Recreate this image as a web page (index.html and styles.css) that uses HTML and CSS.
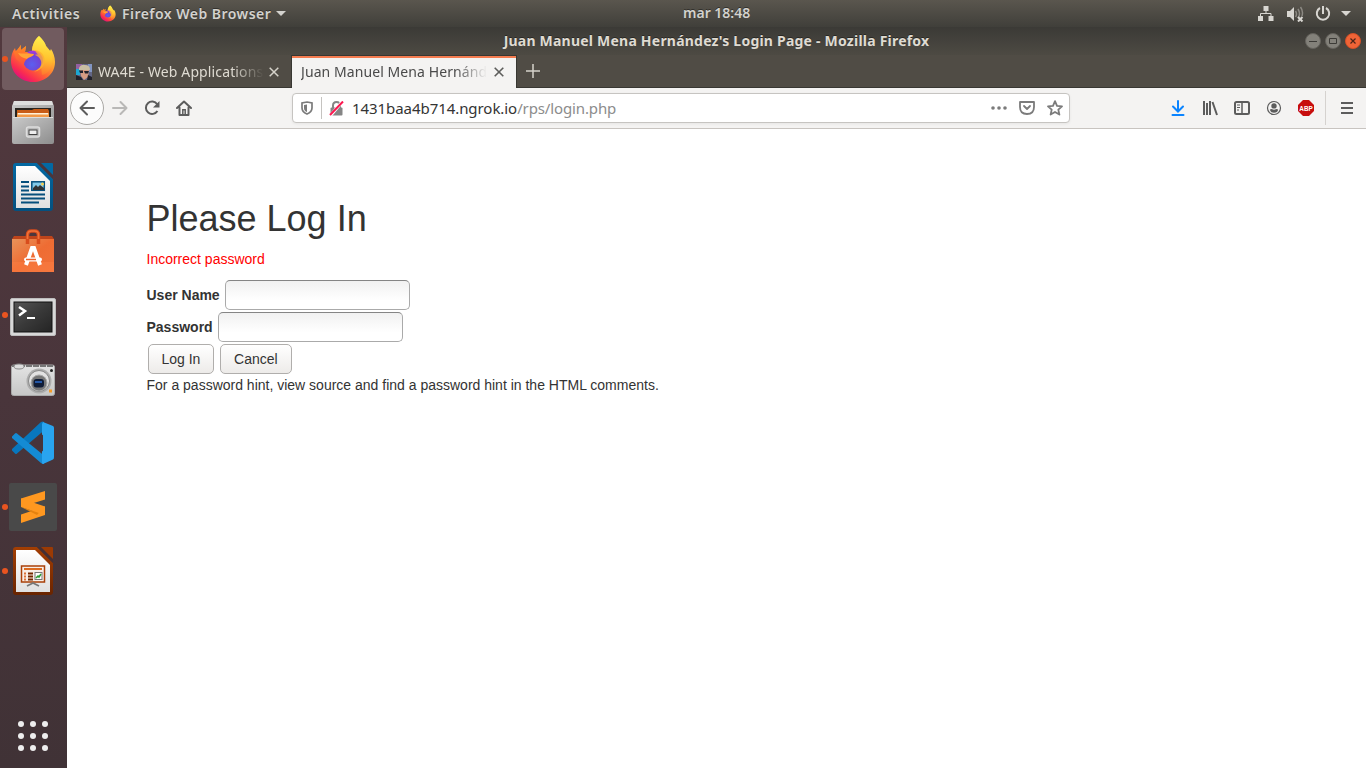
FILE: index.html
```
<!DOCTYPE html>
<html lang="en">
<head>
<meta charset="utf-8">
<title>Juan Manuel Mena Hernández's Login Page</title>
<link rel="stylesheet" href="styles.css">
</head>
<body>
<svg class="defs" width="0" height="0">
  <defs>
    <linearGradient id="fxBody" x1=".9" y1="0.1" x2="0.3" y2="1"><stop offset="0" stop-color="#fff04a"/><stop offset=".35" stop-color="#ffae2e"/><stop offset=".65" stop-color="#ff6434"/><stop offset=".85" stop-color="#fa2d50"/><stop offset="1" stop-color="#e0107c"/></linearGradient>
    <linearGradient id="fxFlame" x1="0" y1="0" x2="0" y2="1"><stop offset="0" stop-color="#fff44f"/><stop offset=".6" stop-color="#ffc72e"/><stop offset="1" stop-color="#ff7a2e"/></linearGradient>
    <linearGradient id="fxHead" x1="0" y1="0" x2="0" y2="1"><stop offset="0" stop-color="#ff8f1f"/><stop offset="1" stop-color="#ff4f3c"/></linearGradient>
    <radialGradient id="fxGlobe" cx=".45" cy=".7" r=".75"><stop offset="0" stop-color="#5b5ff0"/><stop offset=".6" stop-color="#7243d4"/><stop offset="1" stop-color="#b833e1"/></radialGradient>
    <linearGradient id="metal" x1="0" y1="0" x2="1" y2="1"><stop offset="0" stop-color="#c9c9c9"/><stop offset="1" stop-color="#8f8f8f"/></linearGradient>
    <linearGradient id="sheet" x1="0" y1="0" x2="0" y2="1"><stop offset="0" stop-color="#fff"/><stop offset="1" stop-color="#e0e0e0"/></linearGradient>
    <linearGradient id="camera" x1="0" y1="0" x2="0" y2="1"><stop offset="0" stop-color="#e4e4e4"/><stop offset="1" stop-color="#c6c6c6"/></linearGradient>
    <linearGradient id="bag" x1="0" y1="0" x2="1" y2="1"><stop offset="0" stop-color="#e8935a"/><stop offset=".5" stop-color="#ee6c33"/><stop offset="1" stop-color="#f2713a"/></linearGradient>
    <linearGradient id="term" x1="0" y1="0" x2="1" y2="1"><stop offset="0" stop-color="#555"/><stop offset=".5" stop-color="#393939"/><stop offset="1" stop-color="#242424"/></linearGradient>
    <linearGradient id="brown" x1="0" y1="0" x2="0" y2="1"><stop offset="0" stop-color="#a33e03"/><stop offset="1" stop-color="#692400"/></linearGradient>
    <linearGradient id="blue" x1="0" y1="0" x2="0" y2="1"><stop offset="0" stop-color="#0369a3"/><stop offset="1" stop-color="#04507f"/></linearGradient>
    <symbol id="firefox" viewBox="0 0 46 48">
      <path d="M29 1c3 3 6 6 7 10 1 2 3 3 4 5l1-2c2 3 4 8 4 13 0 12-10 20-22 20S1 38 1 26c0-5 1-9 4-13l1 4 5-7v5l5-4-1 6 7 0C22 10 25 4 29 1z" fill="url(#fxBody)"/>
      <path d="M29 1c3 3 6 6 7 10 5 5 8 11 6 18-1 6-5 10-10 11l-2-20-8-4c0-6 3-11 7-15z" fill="url(#fxFlame)" opacity=".8"/>
      <circle cx="23" cy="25.500" r="10" fill="url(#fxGlobe)"/>
      <path d="M25 15c8 1 11 8 9 14-2 5-6 7-10 8 6-3 8-7 7-11-1-3-3-5-6-6 2-1 3 0 3 0-1-2-3-3-3-5z" fill="#ffb030" opacity=".8"/>
      <path d="M4 17l3-2 4-5v5l5-4-1 6c2 0 3 1 5 2h4c-1 3-6 3-7 5-2 2-3 3-3 6l-8-6z" fill="url(#fxHead)"/>
      <path d="M8 18c4 1 9 0 16 1-1 3-6 3-7 5-3-1-7-2-9-6z" fill="#ffa436"/>
    </symbol>
  </defs>
</svg>

<header class="topbar">
  <span class="activities ui-bold">Activities</span>
  <svg class="fx-small" width="16" height="17"><use href="#firefox"/></svg>
  <span class="appname ui-bold">Firefox Web Browser</span>
  <svg class="caret" width="10" height="5"><path d="M0 0h10L5 5z" fill="#d3d2ce"/></svg>
  <span class="clock ui-bold">mar 18:48</span>
  <div class="tray">
    <svg width="16" height="16" fill="#d8d6d1"><path d="M5.500 0h5v5h-5zM0 10h5v5H0zM10.500 10h5v5h-5z"/><path d="M8 5v3M2.500 10V7.500h10.500V10" fill="none" stroke="#d8d6d1"/></svg>
    <svg class="volume" width="18" height="16" fill="#d8d6d1"><path d="M1 5h3l4-4v14l-4-4H1z"/><path d="M9.500 5q2 3 0 6M12 3q3 5 0 9M14.500 1q3 4 1.500 9" fill="none" stroke="#8c8983" stroke-width="1.500"/><path d="M12 11l4.500 4.500m0-4.500L12 15.500" stroke="#d8d6d1" stroke-width="2"/></svg>
    <svg class="power" width="16" height="16" fill="none" stroke="#d8d6d1" stroke-width="2"><path d="M5 2a6.200 6.200 0 1 0 6 0M8 0v8"/></svg>
    <svg width="10" height="5"><path d="M0 0h10L5 5z" fill="#d8d6d1"/></svg>
  </div>
</header>

<div class="desktop">
  <nav class="dock">
    <div class="app active running"><svg width="46" height="48"><use href="#firefox"/></svg></div>
    <div class="app"><svg width="48" height="48"><g transform="translate(0 -1)">
      <path d="M5 3h38l2 5v36q0 2-2 2H5q-2 0-2-2V8z" fill="url(#metal)"/><path d="M5 3h38l1 4H4z" fill="#dedede"/>
      <path d="M6 10h36v11H6z" fill="#282420"/><path d="M8 12h15l2-1h14l1 2v9H8z" fill="#c85c17"/><path d="M8 15h32v6H8z" fill="#f39a48"/><path d="M9 15h30v1.500H9z" fill="#fff0d8"/>
      <path d="M4 19h40v25q0 1-1 1H5q-1 0-1-1z" fill="url(#metal)"/><path d="M4 19h40v1H4z" fill="#ddd"/>
      <rect x="17.500" y="29" width="13" height="10" rx="2" fill="#bbb" stroke="#ddd" stroke-width="1.500"/><rect x="20" y="32" width="8" height="4.500" fill="#eee" stroke="#444"/></g></svg></div>
    <div class="app"><svg width="48" height="48">
      <path d="M7 0h21l16 16v29q0 3-3 3H7q-3 0-3-3V3q0-3 3-3z" fill="url(#blue)"/><path d="M28 0h4l12 12v4z" fill="#4b353a"/><path d="M32 0h11q1 0 1 1v11z" fill="#0369a3"/>
      <path d="M7 3h19l15 15v27H7z" fill="url(#sheet)"/>
      <path d="M12 19h8M12 23.500h8M12 27.500h8M12 31.500h24M12 35.500h24M12 39.500h18" stroke="#064f7c" stroke-width="2"/>
      <rect x="22.800" y="18.800" width="12.500" height="8.500" fill="#83cbea" stroke="#064f7c" stroke-width="1.500"/><path d="M24 27v-2l3-3 2 2 2-2 4 3v2z" fill="#333"/><circle cx="33.500" cy="21" r="1.500" fill="#f6ce50"/></svg></div>
    <div class="app"><svg width="48" height="48">
      <path d="M5 9h38l2 3H3z" fill="#bd441b"/><path d="M3 12h42v33H3z" fill="url(#bag)"/><path d="M3 35h42v10H3z" fill="#ff8247" opacity=".4"/>
      <path d="M18.500 17V8q0-4 4-4h3q4 0 4 4v9" fill="none" stroke="#d84c1c" stroke-width="3.500"/><path d="M18.500 12V8q0-4 4-4h3q4 0 4 4v4" fill="none" stroke="#f0733a" stroke-width="1.500"/>
      <path d="M17 38l6-17h2l6 17" fill="none" stroke="#fff" stroke-width="4"/><rect x="15" y="30.500" width="18" height="4" rx="2" fill="#fff"/><path d="M17 32.500h10" stroke="#ee6430" stroke-width="1.500"/></svg></div>
    <div class="app running"><svg width="48" height="48"><g transform="translate(0 1)">
      <rect x="1.500" y="6.500" width="45" height="37" rx="1.500" fill="#d8d8d8" stroke="#bdbdbd"/><rect x="5" y="10" width="38" height="30" fill="url(#term)" stroke="#111"/>
      <path d="M10 15l6 4-6 4.500" fill="none" stroke="#fff" stroke-width="2.500"/><path d="M18 26h8" stroke="#fff" stroke-width="2"/></g></svg></div>
    <div class="app"><svg width="48" height="48"><g transform="translate(0 1)">
      <rect x="2.500" y="9" width="43" height="30.500" rx="2" fill="url(#camera)" stroke="#aaa"/><path d="M3 10h42" stroke="#777" stroke-width="2" stroke-dasharray="6 1"/><ellipse cx="10" cy="10.500" rx="5" ry="2.500" fill="#ddd" stroke="#888"/>
      <circle cx="30" cy="25" r="12.500" fill="#adadad"/><circle cx="30" cy="25" r="10.500" fill="#e2e2e2" stroke="#888"/><circle cx="30" cy="27" r="8" fill="#777" stroke="#aaa"/><rect x="24.500" y="23" width="10.500" height="8.500" rx="3" fill="#101c36"/><path d="M26 25h7v2h-7z" fill="#2456a5"/><circle cx="42.500" cy="14.500" r="1.500" fill="#222"/><path d="M40 33.500h3v3h-3z" fill="#f79b26"/></g></svg></div>
    <div class="app"><svg width="48" height="48">
      <path d="M3 31.500l3 3q1 1 2 0l27-23V3q-1-1-3 0L3 30z" fill="#0877bd"/><path d="M3 17.500l3-3q1-1 2 0l27 22V45q-2 0-3-1L3 19z" fill="#148bd4"/><path d="M34 3l10 4q1 .500 1 2v29q0 2-1 2.500L34 45q-1 0-1-2V5z" fill="#29a4ef"/><path d="M34 15.500L23 24l11 8.500z" fill="#47333a"/></svg></div>
    <div class="app running"><svg width="48" height="48">
      <rect width="48" height="48" rx="2" fill="#494949"/><path d="M12 15.500L36 8v8.500L12 24zM12 31.500L36 23.500V32L12 40z" fill="#ff9820"/><path d="M12 24l13 4 10-4-7 8z" fill="#e5820f"/><path d="M12 15.500v8.500l24 8v-8.500z" fill="#ff9820"/></svg></div>
    <div class="app running"><svg width="48" height="48">
      <path d="M7 0h21l16 16v29q0 3-3 3H7q-3 0-3-3V3q0-3 3-3z" fill="url(#brown)"/><path d="M28 0h4l12 12v4z" fill="#452f33"/><path d="M32 0h11q1 0 1 1v11z" fill="#9b3a04"/><path d="M7 3h19l15 15v27H7z" fill="url(#sheet)"/>
      <rect x="12.500" y="19" width="23" height="16" fill="#f8eee7" stroke="#a94009" stroke-width="1.500"/><path d="M15 22h18" stroke="#dc6b20" stroke-width="2"/><path d="M15 26.500h2M15 29.500h2M15 32.500h2" stroke="#dc7137" stroke-width="2"/><path d="M19 26.500h5M19 29.500h5M19 32.500h5" stroke="#762800" stroke-width="2"/><rect x="26" y="25.500" width="7" height="7" fill="#fff" stroke="#777"/><path d="M27 31l2-2 1 1 2-3" stroke="#2c9b32" fill="none" stroke-width="1.500"/><path d="M18 39l6-3 6 3" fill="none" stroke="#777" stroke-width="1.800"/></svg></div>
    <svg class="apps-grid" width="30" height="30" fill="#eee"><circle cx="3" cy="3" r="3"/><circle cx="15" cy="3" r="3"/><circle cx="27" cy="3" r="3"/><circle cx="3" cy="15" r="3"/><circle cx="15" cy="15" r="3"/><circle cx="27" cy="15" r="3"/><circle cx="3" cy="27" r="3"/><circle cx="15" cy="27" r="3"/><circle cx="27" cy="27" r="3"/></svg>
  </nav>

  <main class="window">
    <div class="titlebar">
      <span class="win-title ui-bold">Juan Manuel Mena Hernández's Login Page - Mozilla Firefox</span>
      <div class="controls">
        <svg width="16" height="16"><circle cx="8" cy="8" r="7.500" fill="#83817a" stroke="#65635d"/><path d="M4 8.500h8" stroke="#3c3b37"/></svg>
        <svg width="16" height="16"><circle cx="8" cy="8" r="7.500" fill="#83817a" stroke="#65635d"/><path d="M4.500 5.500h7v5h-7z" fill="none" stroke="#3c3b37"/></svg>
        <svg width="16" height="16"><circle cx="8" cy="8" r="7.500" fill="#ef6437" stroke="#d45027"/><path d="M5.500 5.500l5 5m0-5l-5 5" stroke="#4b2418" stroke-width="1.200"/></svg>
      </div>
    </div>
    <div class="tabs">
      <div class="tab">
        <svg width="16" height="16"><path d="M0 0h16v16H0z" fill="#626585"/><path d="M0 0h6v5H0z" fill="#9360a0"/><path d="M0 5h4v6H0z" fill="#1ca7d3"/><path d="M12 0h4v8h-4z" fill="#8295c1"/><path d="M3 4q2-4 6-3 5 0 5 5H3z" fill="#c9bea3"/><path d="M4 6h9l-1 7-4 3-3-4z" fill="#d69b83"/><path d="M3 6.500h4v2.500H4zM8 7h5l-1 2.500H9z" fill="#20212d"/><path d="M0 11l5 2 2 3H0zM12 11l4 2v3h-5z" fill="#21202a"/></svg>
        <span class="tab-label first">WA4E - Web Applications</span>
        <svg class="close" width="10" height="10" stroke="#d5d2ca"><path d="M.700 .700l8.600 8.600m0-8.600L.700 9.300" stroke-width="1.500"/></svg>
      </div>
      <div class="tab selected">
        <span class="tab-label second">Juan Manuel Mena Hernánd</span>
        <svg class="close" width="10" height="10" stroke="#5d5d5b"><path d="M.700 .700l8.600 8.600m0-8.600L.700 9.300" stroke-width="1.600"/></svg>
      </div>
      <div class="newtab"><svg width="14" height="14" stroke="#d5d2ca"><path d="M0 7h14M7 0v14" stroke-width="1.500"/></svg></div>
    </div>
    <div class="navbar">
      <span class="back"><svg width="16" height="16" fill="none" stroke="#5c5c5c" stroke-width="2"><path d="M15 8H2M8 1.500L1.500 8 8 14.500" stroke-linecap="round" stroke-linejoin="round"/></svg></span>
      <span class="tool"><svg width="16" height="16" fill="none" stroke="#b9b8b7" stroke-width="2"><path d="M1 8h13M8.500 2l6 6-6 6" stroke-linecap="round" stroke-linejoin="round"/></svg></span>
      <span class="tool"><svg width="16" height="16" fill="none" stroke="#5c5c5c" stroke-width="2"><path d="M13.200 4.200A6.200 6.200 0 1 0 13.400 11"/><path d="M15.500 1v6.500H9z" fill="#5c5c5c" stroke="none"/></svg></span>
      <span class="tool"><svg width="16" height="16" fill="none" stroke="#5c5c5c" stroke-width="2"><path d="M1 8l7-6.500L15 8M3.500 7.500V15h9V7.500" stroke-linejoin="round" stroke-linecap="round"/><path d="M6.800 15V9.800h2.400V15" stroke-width="1.500"/></svg></span>
      <div class="urlbar">
        <svg class="shield" width="12" height="14"><path d="M6 1l5 1v5q0 4-5 6-5-2-5-6V2z" fill="none" stroke="#7b7b7b" stroke-width="1.700"/><path d="M6 3.500V11q-3-1-3-4V4z" fill="#7b7b7b"/></svg>
        <i class="url-sep"></i>
        <svg class="lock" width="15" height="15"><path d="M4 7V4.500q0-3.500 3.500-3.500T11 4.500V7" fill="none" stroke="#858585" stroke-width="2"/><rect x="1.500" y="6.500" width="12" height="8" rx="1" fill="#858585"/><path d="M1.500 14.500L13.500 .500" stroke="#fff" stroke-width="3.200"/><path d="M1 14L14 .500" stroke="#fc1750" stroke-width="2"/></svg>
        <span class="host">1431baa4b714.ngrok.io</span><span class="path">/rps/login.php</span>
        <div class="url-icons">
          <svg width="16" height="16" fill="#7b7b7b"><circle cx="2" cy="8" r="1.800"/><circle cx="8" cy="8" r="1.800"/><circle cx="14" cy="8" r="1.800"/></svg>
          <svg width="16" height="16" fill="none" stroke="#7b7b7b" stroke-width="1.800"><path d="M1 2h14v5q0 7-7 7T1 7z" stroke-linejoin="round"/><path d="M5 6l3 3 3-3" stroke-linecap="round" stroke-linejoin="round"/></svg>
          <svg width="16" height="16" fill="none" stroke="#7b7b7b" stroke-width="1.800"><path d="M8 1.200l2 4.600 5 .500-3.700 3.300 1.100 5L8 12l-4.400 2.600 1.100-5L1 6.300l5-.500z" stroke-linejoin="round"/></svg>
        </div>
      </div>
      <div class="tools">
        <span class="tool"><svg width="14" height="16" fill="none" stroke="#0a84ff" stroke-width="2"><path d="M7 1v10M2 6.500L7 11.500l5-5M1.500 15h11" stroke-linecap="round"/></svg></span>
        <span class="tool"><svg width="16" height="16" fill="none" stroke="#5c5c5c" stroke-width="2"><path d="M2 1v14M5 3v12M8 1v14M10.500 2L15 15"/></svg></span>
        <span class="tool"><svg width="16" height="16" fill="none" stroke="#5c5c5c" stroke-width="2"><rect x="1" y="2" width="14" height="12" rx="1.500"/><path d="M8 2v12" stroke-width="1.500"/><path d="M3 5h3M3 7.500h3M3 10h2" stroke-width="1"/></svg></span>
        <span class="tool"><svg width="16" height="16" fill="#5c5c5c"><circle cx="8" cy="8" r="6.500" fill="none" stroke="#5c5c5c" stroke-width="1.200"/><circle cx="8" cy="5.900" r="2.700"/><path d="M3.800 9.500l2-.500q2.200 1.300 4.400 0l2 .500q-.700 3.300-4.200 3.300T3.800 9.500z"/></svg></span>
        <span class="tool"><svg class="abp-icon" width="16" height="16"><path d="M5 0h6l5 5v6l-5 5H5l-5-5V5z" fill="#c70d0d"/><text x="1.300" y="10.900" textLength="13.400" lengthAdjust="spacingAndGlyphs" class="abp">ABP</text></svg></span>
      </div>
      <i class="tool-sep"></i>
      <span class="menu"><svg width="12" height="12" stroke="#5c5c5c" stroke-width="2"><path d="M0 1h12M0 6h12M0 11h12"/></svg></span>
    </div>

    <section class="page">
      <h1>Please Log In</h1>
      <p class="error">Incorrect password</p>
      <form>
        <div class="field"><label for="nam">User Name</label> <input type="text" id="nam"></div>
        <div class="field"><label for="pw">Password</label> <input type="password" id="pw"></div>
        <div class="field"><button type="button">Log In</button> <button type="button">Cancel</button></div>
      </form>
      <p>For a password hint, view source and find a password hint in the HTML comments.</p>
    </section>
  </main>
</div>
</body>
</html>
```

FILE: styles.css
```
* { box-sizing: border-box; }
body { margin: 0; width: 1366px; height: 768px; overflow: hidden; display: flex; flex-direction: column; font-family: "Noto Sans", "Open Sans", sans-serif; font-size: 14px; }
svg { display: block; flex: none; }
.defs { position: absolute; }
.ui-bold { font-weight: 700; font-size: 14px; white-space: nowrap; color: #dfdbd2; text-shadow: 0 -1px 0 rgba(0,0,0,.4); }

.topbar { height: 27px; flex: none; display: flex; align-items: center; padding-left: 12px; position: relative; background: linear-gradient(#5a564e, #403f3a); }
.topbar .ui-bold { color: #d3d2ce; font-weight: 600; }
.topbar .activities { width: 68px; letter-spacing: .58px; }
.fx-small { margin: 0 6px 0 20px; }
.topbar .appname { width: 149px; letter-spacing: .47px; }
.caret { margin-left: 5px; }
.clock { position: absolute; left: 683px; top: 3px; }
.tray { margin-left: auto; display: flex; align-items: center; padding-right: 15px; }
.volume { margin: 0 11px 0 12px; }
.power { margin-right: 10px; }

.desktop { flex: 1; display: flex; min-height: 0; }
.dock { width: 67px; flex: none; display: flex; flex-direction: column; align-items: center; padding: 1px 1px 0 0; background: linear-gradient(#52393e, #49353b 50%, #403236); }
.app { width: 62px; height: 62px; margin-bottom: 2px; flex: none; display: flex; align-items: center; justify-content: center; position: relative; border-radius: 4px; }
.app.active { background: #715b5f; }
.app.running::before { content: ""; position: absolute; left: 0; top: 28px; width: 6px; height: 6px; border-radius: 3px; background: #e95420; }
.apps-grid { margin-top: auto; margin-bottom: 17px; }

.window { flex: 1; display: flex; flex-direction: column; min-width: 0; background: #fff; }
.titlebar { height: 28px; flex: none; display: flex; align-items: center; justify-content: center; position: relative; padding-bottom: 2px; background: linear-gradient(#3b3a36, #4d4a43); }
.win-title { letter-spacing: .22px; }
.controls { position: absolute; right: 5px; top: 6px; display: flex; gap: 4px; }
.tabs { height: 33px; flex: none; display: flex; background: #504c45; border-bottom: 1px solid #383732; }
.tab { width: 225px; height: 32px; display: flex; align-items: center; padding: 1px 12px 0 9px; border-right: 1px solid #383732; color: #dfdbd2; }
.tab.selected { height: 33px; background: #f4f3f2; color: #4a4a4a; border-top: 1px solid #383732; box-shadow: inset 0 2px #f57c50; padding-top: 0; }
.tab-label { white-space: nowrap; overflow: hidden; -webkit-mask-image: linear-gradient(90deg, #000 calc(100% - 32px), transparent); mask-image: linear-gradient(90deg, #000 calc(100% - 32px), transparent); }
.tab-label.first { width: 166px; margin-left: 6px; letter-spacing: .13px; }
.tab-label.second { width: 186px; letter-spacing: .08px; margin-top: -1px; }
.close { margin-left: auto; }
.newtab { width: 32px; display: flex; align-items: center; justify-content: center; }

.navbar { height: 41px; flex: none; display: flex; align-items: center; padding-left: 3px; background: #f4f3f2; border-bottom: 1px solid #c8c4c0; }
.back { width: 34px; height: 34px; border-radius: 17px; border: 1px solid #aaa8a5; background: #fcfcfc; display: flex; align-items: center; justify-content: center; }
.tool, .menu { width: 32px; height: 32px; display: flex; align-items: center; justify-content: center; }
.urlbar { width: 778px; height: 30px; margin: 0 92px; display: flex; align-items: center; background: #fff; border: 1px solid #c6c4c1; border-radius: 4px; box-shadow: 0 1px 3px rgba(0,0,0,.06); }
.shield { margin-left: 8px; }
.url-sep { width: 1px; height: 22px; background: #c5c3c0; margin: 0 7px 0 8px; }
.lock { margin-right: 8px; }
.host, .path { font-size: 15px; white-space: nowrap; color: #343434; letter-spacing: -.06px; }
.path { color: #8c8c8c; letter-spacing: -.13px; }
.url-icons { margin-left: auto; margin-right: 6px; display: flex; gap: 12px; }
.tools { display: flex; }
.tool-sep { width: 1px; height: 34px; margin: 0 5px 0 3px; background: #d5d2cf; }
.abp-icon { overflow: visible; }
.abp { font: bold 8px "Liberation Sans", sans-serif; fill: #fff; }

.page { padding: 50px 79.5px; font-family: "Liberation Sans", Arial, sans-serif; font-size: 14px; line-height: 20px; color: #333; }
.page h1 { font-size: 36px; font-weight: 400; line-height: 39.6px; margin: 20px 0 10px; }
.page p { margin: 0; }
.page .error { color: #f00; margin-bottom: 10px; }
.field { height: 32px; display: flex; align-items: center; gap: 4px; }
.field label { font-weight: 700; }
.field input { width: 185px; height: 30px; margin: 1px; border: 1px solid #aaa; border-top-color: #858585; border-radius: 5px; background: linear-gradient(#f1f1f1, #fff 70%); outline: 0; }
.field button { height: 30px; margin: 1px; padding: 0 12.9px; border: 1px solid #b0aeac; border-radius: 5px; background: linear-gradient(#fff, #edebe9); font: 14px "Liberation Sans", Arial, sans-serif; color: #333; }
```
